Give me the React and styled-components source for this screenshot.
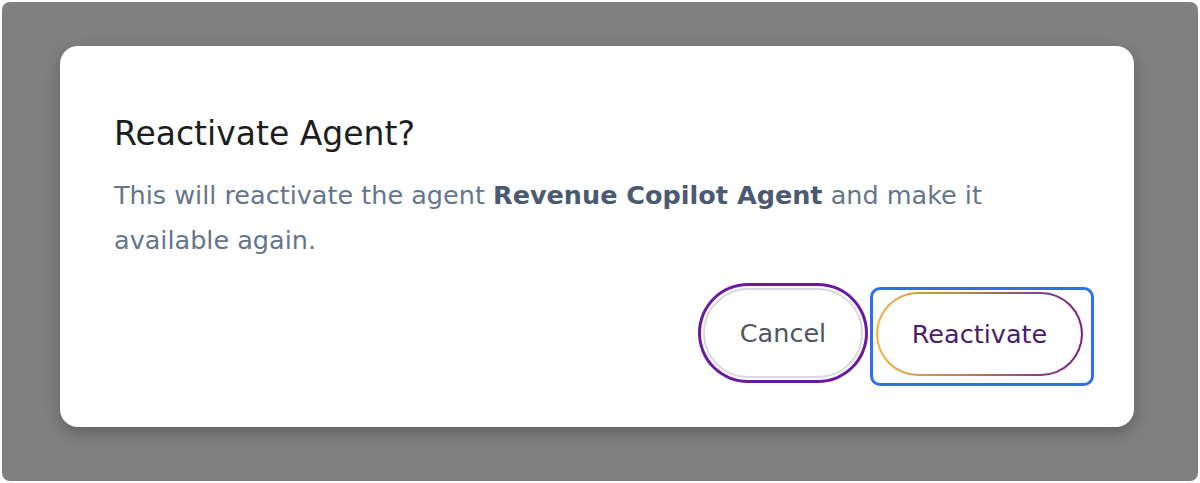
import React from 'react'
import styled, { createGlobalStyle } from 'styled-components'

const GlobalStyle = createGlobalStyle`
    html, body {
        margin: 0;
        padding: 0;
        background: #ffffff;
    }
    body {
        font-family: "DejaVu Sans", Verdana, sans-serif;
    }
`

const Backdrop = styled.div`
    margin: 2px;
    height: 479px;
    box-sizing: border-box;
    padding: 44px 64px 54px 58px;
    border-radius: 8px;
    background-color: #808080;
    display: flex;
    align-items: flex-start;
`

const Modal = styled.div`
    width: 1074px;
    box-sizing: border-box;
    padding: 66px 40px 41px 54px;
    background: #ffffff;
    border-radius: 18px;
    box-shadow: 0 6px 16px rgba(0, 0, 0, 0.25);
    display: flex;
    flex-direction: column;
`

const Title = styled.h2`
    margin: 0;
    font-size: 33px;
    font-weight: 400;
    line-height: 44px;
    color: #1c1d21;
`

const Message = styled.p`
    margin: 17px 0 0 0;
    font-size: 25.5px;
    line-height: 45px;
    color: #66758c;

    & strong {
        font-weight: 700;
        color: #4b5a72;
    }
`

const Actions = styled.div`
    display: flex;
    justify-content: flex-end;
    align-items: center;
    gap: 7px;
    margin-top: 24px;
`

const CancelButton = styled.button`
    width: 160px;
    height: 90px;
    margin-bottom: 7px;
    border-radius: 45px;
    border: 2px solid #dcd8e3;
    background: #ffffff;
    box-shadow: 0 0 0 2px #ffffff, 0 0 0 5px #6a1aa0;
    font-family: inherit;
    font-size: 25.5px;
    color: #50555e;
    cursor: pointer;
`

const FocusFrame = styled.div`
    border: 3px solid #2f6fea;
    border-radius: 10px;
    padding: 2px 8px 7px 3px;
    display: flex;
`

const PrimaryButton = styled.button`
    width: 207px;
    height: 84px;
    border-radius: 42px;
    border: 2px solid transparent;
    background:
        linear-gradient(#ffffff, #ffffff) padding-box,
        linear-gradient(90deg, #f2b33a 0%, #c07a5a 45%, #7a1a86 100%) border-box;
    font-family: inherit;
    font-size: 25.5px;
    color: #4b1d6e;
    cursor: pointer;
`

export default function App() {
    return (
        <>
            <GlobalStyle />
            <Backdrop>
                <Modal>
                    <Title>Reactivate Agent?</Title>
                    <Message>
                        This will reactivate the agent <strong>Revenue Copilot Agent</strong> and make it available again.
                    </Message>
                    <Actions>
                        <CancelButton>Cancel</CancelButton>
                        <FocusFrame>
                            <PrimaryButton>Reactivate</PrimaryButton>
                        </FocusFrame>
                    </Actions>
                </Modal>
            </Backdrop>
        </>
    )
}
